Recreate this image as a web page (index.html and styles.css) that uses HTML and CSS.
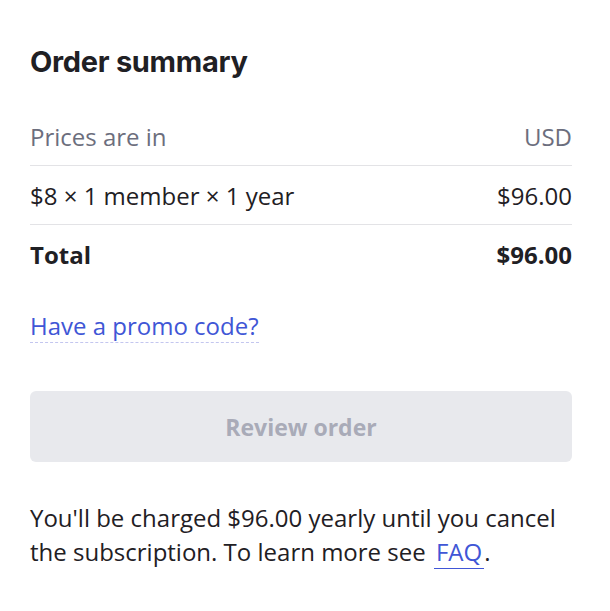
FILE: index.html
```html
<!DOCTYPE html>
<html lang="en">
<head>
    <meta charset="UTF-8">
    <title>Order summary</title>
    <link rel="stylesheet" href="styles.css">
</head>
<body>
    <div class="summary">
        <h2 class="summary-title">Order summary</h2>
        <div class="row row-muted">
            <span>Prices are in</span>
            <span>USD</span>
        </div>
        <div class="row">
            <span>$8 × 1 member × 1 year</span>
            <span>$96.00</span>
        </div>
        <div class="row row-total">
            <span>Total</span>
            <span>$96.00</span>
        </div>
        <a href="#" class="promo">Have a promo code?</a>
        <button type="button" class="btn-review" disabled>Review order</button>
        <p class="note">You'll be charged $96.00 yearly until you cancel the subscription. To learn more see <a href="#" class="faq">FAQ</a>.</p>
    </div>
</body>
</html>
```
FILE: styles.css
```css
body {
    margin: 0;
    background: #fff;
    font-family: "Open Sans", sans-serif;
    color: #1f2024;
}
.summary {
    width: 542px;
    padding: 44px 0 0 30px;
}
.summary-title {
    font-family: Inter, sans-serif;
    font-size: 29px;
    font-weight: 700;
    letter-spacing: -0.3px;
    line-height: 36px;
    margin: 0 0 27px;
}
.row {
    display: flex;
    justify-content: space-between;
    align-items: center;
    height: 58px;
    font-size: 24px;
    border-bottom: 1px solid #e3e3e6;
}
.row-muted {
    color: #6c6e7d;
}
.row-total {
    border-bottom: none;
    font-weight: 700;
}
.promo {
    display: inline-block;
    margin-top: 27px;
    font-size: 24px;
    color: #4056d6;
    text-decoration: none;
    border-bottom: 1px dashed #c3c6ef;
    line-height: 32px;
}
.btn-review {
    display: block;
    width: 100%;
    height: 71px;
    margin-top: 48px;
    border: none;
    border-radius: 6px;
    background: #e8e9ed;
    color: #a9abb8;
    font-family: "Open Sans", sans-serif;
    font-size: 23px;
    font-weight: 700;
}
.note {
    margin: 39px 0 0;
    font-size: 24px;
    line-height: 34px;
}
.faq {
    color: #4056d6;
    text-decoration: none;
    border-bottom: 1px solid #4056d6;
    padding: 0 2px;
    margin-left: 2px;
}
```
